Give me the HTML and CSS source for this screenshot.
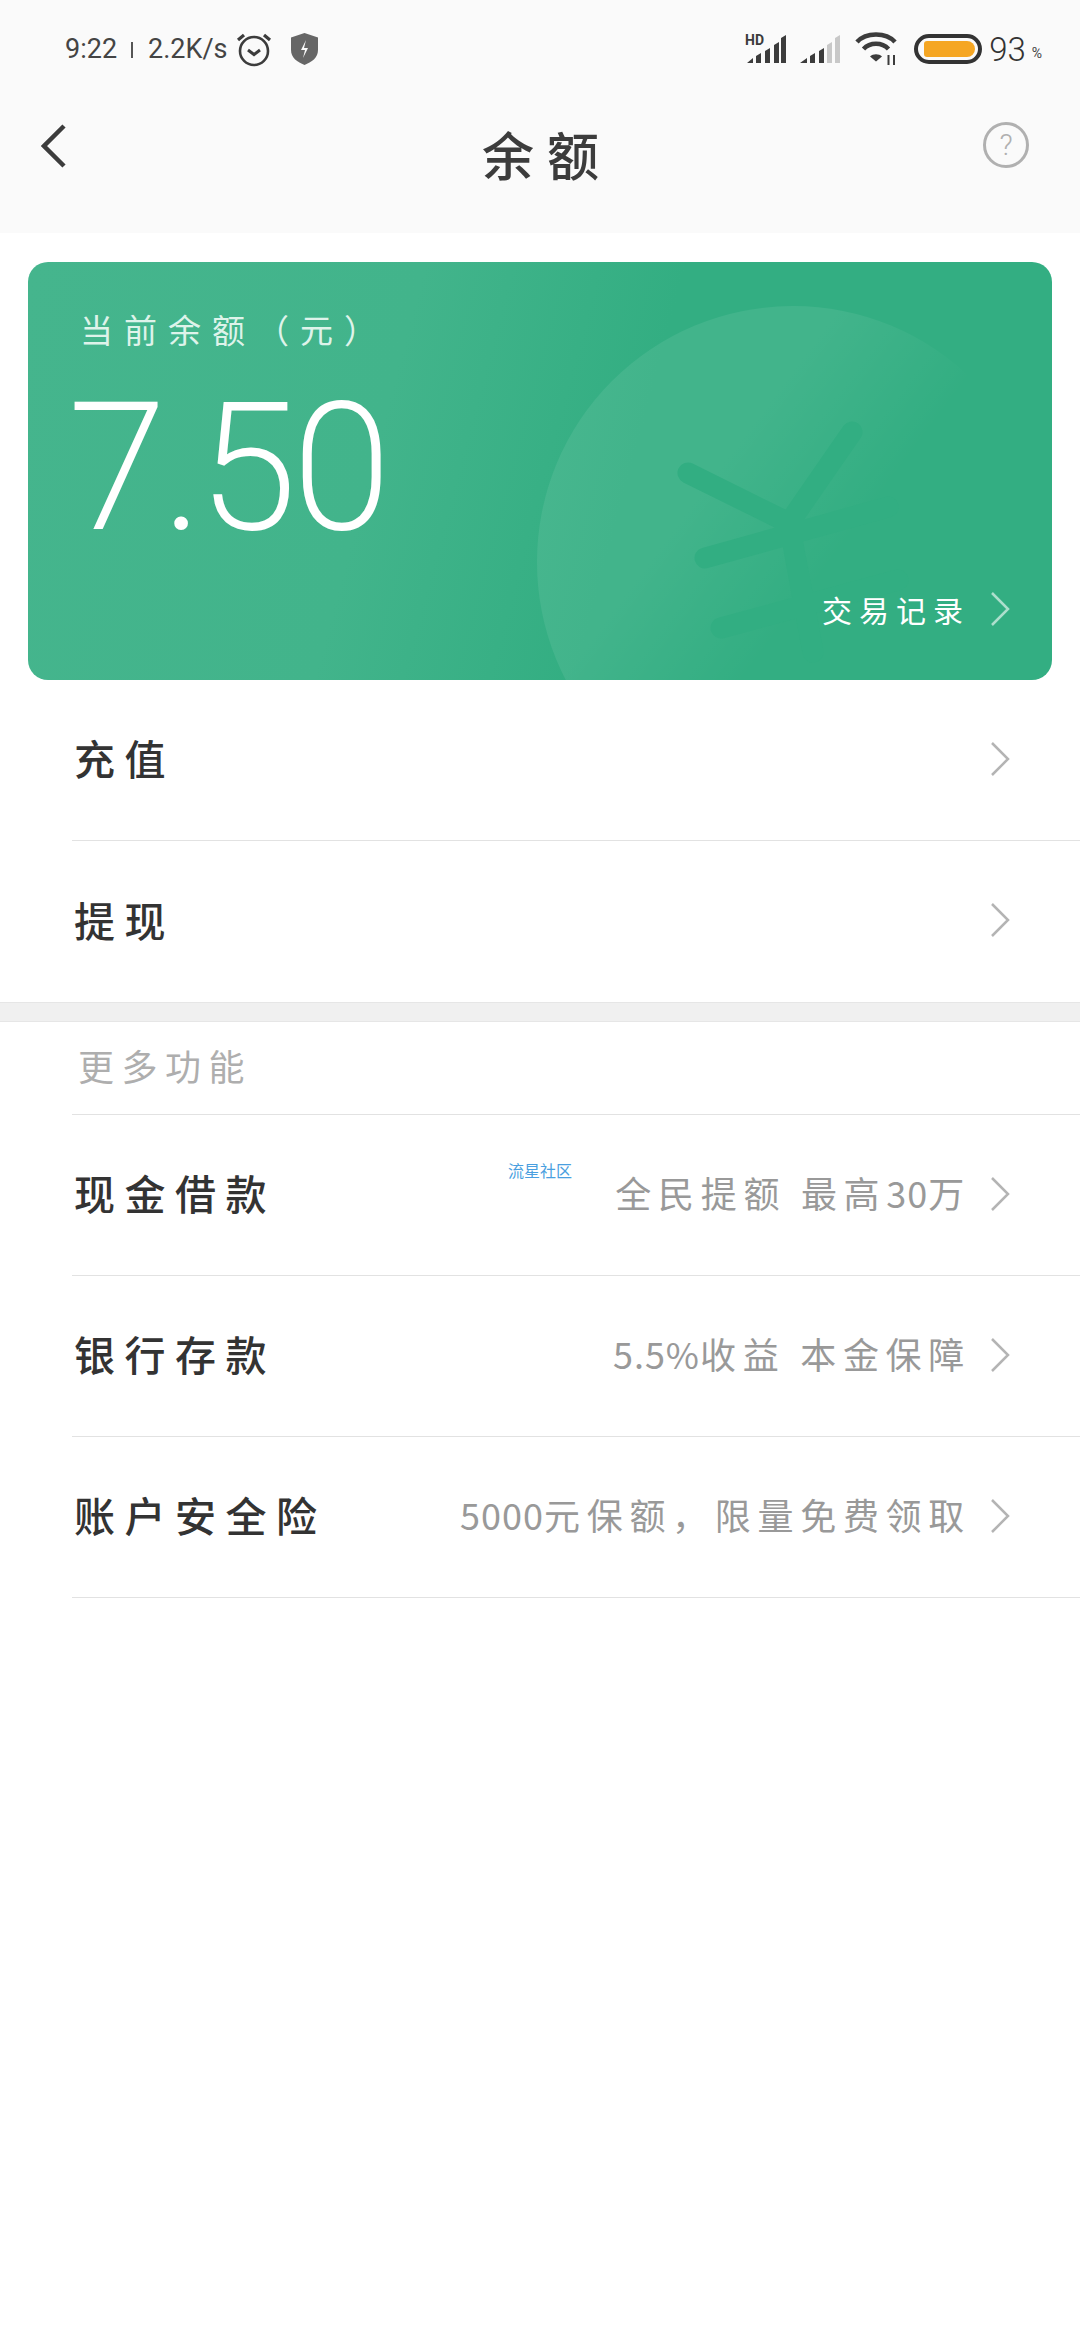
FILE: index.html
```html
<!DOCTYPE html>
<html lang="zh-CN">
<head>
    <meta charset="UTF-8">
    <meta name="viewport" content="width=device-width, initial-scale=1.0">
    <title>余额</title>
    <link rel="stylesheet" href="styles.css">
</head>
<body>
    <header class="top">
        <div class="status">
            <span class="status-time">9:22</span>
            <span class="status-sep"></span>
            <span class="status-speed">2.2K/s</span>
            <svg class="icon-alarm" width="36" height="36" viewBox="0 0 36 36" fill="none" stroke="#3c3c3c">
                <circle cx="18" cy="20" r="14" stroke-width="2.6"/>
                <path d="M12 19l6 4.5 6-4.5" stroke-width="3"/>
                <path d="M2 9l6-5M34 9l-6-5" stroke-width="3.2"/>
            </svg>
            <svg class="icon-shield" width="27" height="32" viewBox="0 0 27 32">
                <path d="M13.5 0L27 4.5V17c0 8-6.500 12-13.500 15C6.500 29 0 25 0 17V4.500z" fill="#666"/>
                <path d="M15 7l-5 10h4l-2 8 5-10h-4z" fill="#fafafa"/>
            </svg>
            <div class="status-right">
                <svg class="icon-signal" width="42" height="32" viewBox="0 0 42 32">
                    <text x="0" y="12" class="hd-label">HD</text>
                    <path d="M2 30l6-5v5zM11 23l5-3v10h-5zM20 18l5-3v15h-5zM29 12l5-3v21h-5zM36 5l5-3v28h-5z" fill="#3c3c3c"/>
                </svg>
                <svg class="icon-signal2" width="42" height="32" viewBox="0 0 42 32">
                    <path d="M1 30l7-5v5zM11 23l5-3v10h-5z M20 18l5-3v15h-5z" fill="#3c3c3c"/>
                    <path d="M28 12l5-3v21h-5zM36 5l5-3v28h-5z" fill="#c8c8c8"/>
                </svg>
                <svg class="icon-wifi" width="44" height="34" viewBox="0 0 44 34" fill="none" stroke="#3c3c3c" stroke-width="4.500">
                    <path d="M2 10C11 0 31 0 40 10"/>
                    <path d="M8.500 17C15 10 27 10 33.500 17"/>
                    <path d="M15 24.500l6 5 6-5c-3-3-9-3-12 0z" fill="#3c3c3c" stroke="none"/>
                    <path d="M33.500 23v10M39 23v10" stroke-width="2"/>
                </svg>
                <div class="battery"><div class="battery-fill"></div></div>
                <span class="battery-num">93</span>
                <span class="battery-pct">%</span>
            </div>
        </div>
        <div class="nav">
            <svg class="nav-back" width="26" height="44" viewBox="0 0 26 44" fill="none" stroke="#3c3c3c" stroke-width="4.500">
                <path d="M23 2L3 22l20 20"/>
            </svg>
            <h1 class="nav-title">余额</h1>
            <div class="nav-help">?</div>
        </div>
    </header>

    <section class="card">
        <svg class="card-art" width="1024" height="418" viewBox="0 0 1024 418" fill="none">
            <defs>
                <linearGradient id="coin" gradientUnits="userSpaceOnUse" x1="562" y1="208" x2="762" y2="358">
                    <stop offset="0" stop-color="#fff" stop-opacity="0.075"/>
                    <stop offset="0.4" stop-color="#fff" stop-opacity="0.075"/>
                    <stop offset="1" stop-color="#fff" stop-opacity="0"/>
                </linearGradient>
            </defs>
            <circle cx="765" cy="300" r="256" fill="url(#coin)"/>
            <path d="M660 211L761 261L824 170M761 261L785 390M677 296L860 245M693 366L870 318" stroke="#32ae82" stroke-width="21" stroke-linecap="round" stroke-linejoin="round"/>
        </svg>
        <div class="card-label">当前余额（元）</div>
        <div class="card-amount">7.50</div>
        <div class="card-foot">
            <span class="card-link">交易记录</span>
            <svg width="20" height="34" viewBox="0 0 20 34" fill="none" stroke="#fff" stroke-opacity="0.6" stroke-width="2.500"><path d="M2 1l16 16L2 33"/></svg>
        </div>
    </section>

    <div class="list">
        <div class="row">
            <span class="row-name">充值</span>
            <svg class="chev" width="20" height="34" viewBox="0 0 20 34" fill="none" stroke="#b4b4b4" stroke-width="2.500"><path d="M2 1l16 16L2 33"/></svg>
        </div>
        <div class="row row-last">
            <span class="row-name">提现</span>
            <svg class="chev" width="20" height="34" viewBox="0 0 20 34" fill="none" stroke="#b4b4b4" stroke-width="2.500"><path d="M2 1l16 16L2 33"/></svg>
        </div>
    </div>

    <div class="band"></div>

    <div class="list">
        <div class="more">更多功能</div>
        <div class="row">
            <span class="row-name">现金借款</span>
            <span class="mark">流星社区</span>
            <span class="row-sub">全民提额 最高<span class="num">30</span>万</span>
            <svg class="chev" width="20" height="34" viewBox="0 0 20 34" fill="none" stroke="#b4b4b4" stroke-width="2.500"><path d="M2 1l16 16L2 33"/></svg>
        </div>
        <div class="row">
            <span class="row-name">银行存款</span>
            <span class="row-sub"><span class="num">5.5%</span>收益 本金保障</span>
            <svg class="chev" width="20" height="34" viewBox="0 0 20 34" fill="none" stroke="#b4b4b4" stroke-width="2.500"><path d="M2 1l16 16L2 33"/></svg>
        </div>
        <div class="row">
            <span class="row-name">账户安全险</span>
            <span class="row-sub"><span class="num">5000</span>元保额，限量免费领取</span>
            <svg class="chev" width="20" height="34" viewBox="0 0 20 34" fill="none" stroke="#b4b4b4" stroke-width="2.500"><path d="M2 1l16 16L2 33"/></svg>
        </div>
    </div>
</body>
</html>
```

FILE: styles.css
```css
html, body {
    margin: 0;
    padding: 0;
}

body {
    width: 1080px;
    height: 2340px;
    overflow: hidden;
    background-color: #ffffff;
    font-family: 'Noto Sans CJK SC', 'Roboto', sans-serif;
    color: #333333;
}

.top {
    height: 233px;
    background-color: #fafafa;
}

.status {
    display: flex;
    align-items: center;
    height: 34px;
    padding: 32px 38px 0 65px;
    font-family: 'Roboto', sans-serif;
    font-size: 27px;
    color: #444444;
}

.status-sep {
    width: 2px;
    height: 16px;
    margin: 2px 15px 0 14px;
    background-color: #555555;
}

.icon-alarm {
    margin-left: 8px;
}

.icon-shield {
    margin-left: 19px;
}

.status-right {
    display: flex;
    align-items: center;
    margin-left: auto;
}

.hd-label {
    font-family: 'Roboto', sans-serif;
    font-size: 14px;
    font-weight: 700;
    fill: #3c3c3c;
}

.icon-signal2 {
    margin-left: 12px;
}

.icon-wifi {
    margin-left: 14px;
}

.battery {
    box-sizing: border-box;
    width: 68px;
    height: 30px;
    margin-left: 15px;
    padding: 3px 3px 3px 6px;
    border: 4px solid #333333;
    border-radius: 15px;
}

.battery-fill {
    width: 51px;
    height: 16px;
    background-color: #f5a623;
    border-radius: 3px 8px 8px 3px;
}

.battery-num {
    margin-left: 7px;
    font-size: 33px;
    font-weight: 300;
    color: #333333;
}

.battery-pct {
    margin: 8px 0 0 6px;
    font-size: 14px;
}

.nav {
    display: flex;
    align-items: flex-start;
    padding: 58px 51px 0 41px;
}

.nav-back {
    flex: none;
}

.nav-title {
    flex: 1;
    margin: -5px 0 0 0;
    padding-left: 44px;
    font-size: 52px;
    font-weight: 500;
    line-height: 70px;
    letter-spacing: 13px;
    text-align: center;
    color: #3c3c3c;
}

.nav-help {
    box-sizing: border-box;
    width: 46px;
    height: 46px;
    margin-top: -2px;
    border: 3px solid #b0b0b0;
    border-radius: 50%;
    font-family: 'Roboto', sans-serif;
    font-size: 29px;
    font-weight: 300;
    line-height: 40px;
    text-align: center;
    color: #b0b0b0;
}

.card {
    position: relative;
    display: flex;
    flex-direction: column;
    box-sizing: border-box;
    height: 418px;
    margin: 29px 28px 0;
    padding: 0 42px 0 52px;
    overflow: hidden;
    border-radius: 20px;
    background: linear-gradient(105deg, #45b58d 0%, #42b48b 35%, #33ae82 58%);
    color: #ffffff;
}

.card-art {
    position: absolute;
    top: 0;
    left: 0;
}

.card-label,
.card-amount,
.card-foot {
    position: relative;
}

.card-label {
    margin-top: 43px;
    font-size: 33px;
    line-height: 48px;
    letter-spacing: 11px;
    color: #def3ea;
}

.card-amount {
    margin: 30px 0 0 -11px;
    font-family: 'Roboto', sans-serif;
    font-size: 176px;
    font-weight: 200;
    line-height: 170px;
    letter-spacing: -3px;
    -webkit-text-stroke: 2px #ffffff;
}

.card-foot {
    display: flex;
    align-items: center;
    justify-content: flex-end;
    margin-top: auto;
    margin-bottom: 49px;
}

.card-link {
    margin-right: 20px;
    font-size: 30px;
    line-height: 44px;
    letter-spacing: 7px;
}

.list {
    margin-left: 72px;
}

.row {
    position: relative;
    display: flex;
    align-items: center;
    box-sizing: border-box;
    height: 161px;
    padding: 0 70px 3px 2px;
    border-bottom: 1px solid #e2e2e2;
}

.row-last {
    border-bottom: none;
}

.row-name {
    margin-bottom: 3px;
    font-size: 41px;
    font-weight: 500;
    letter-spacing: 9.5px;
    color: #333333;
}

.row-sub {
    margin-left: auto;
    margin-right: 19px;
    margin-bottom: 3px;
    font-size: 36px;
    letter-spacing: 6.7px;
    white-space: nowrap;
    color: #999999;
}

.num {
    letter-spacing: 1px;
}

.chev {
    flex: none;
    margin-left: auto;
}

.row-sub + .chev {
    margin-left: 0;
}

.mark {
    position: absolute;
    top: 46px;
    left: 436px;
    font-size: 16px;
    line-height: 18px;
    color: #4a9fe0;
}

.band {
    height: 18px;
    border-top: 1px solid #e6e6e6;
    border-bottom: 1px solid #e6e6e6;
    background-color: #f0f0f0;
}

.more {
    box-sizing: border-box;
    height: 93px;
    padding: 21px 0 0 6px;
    border-bottom: 1px solid #e2e2e2;
    font-size: 36px;
    line-height: 44px;
    letter-spacing: 7.5px;
    color: #aeaeae;
}
```
